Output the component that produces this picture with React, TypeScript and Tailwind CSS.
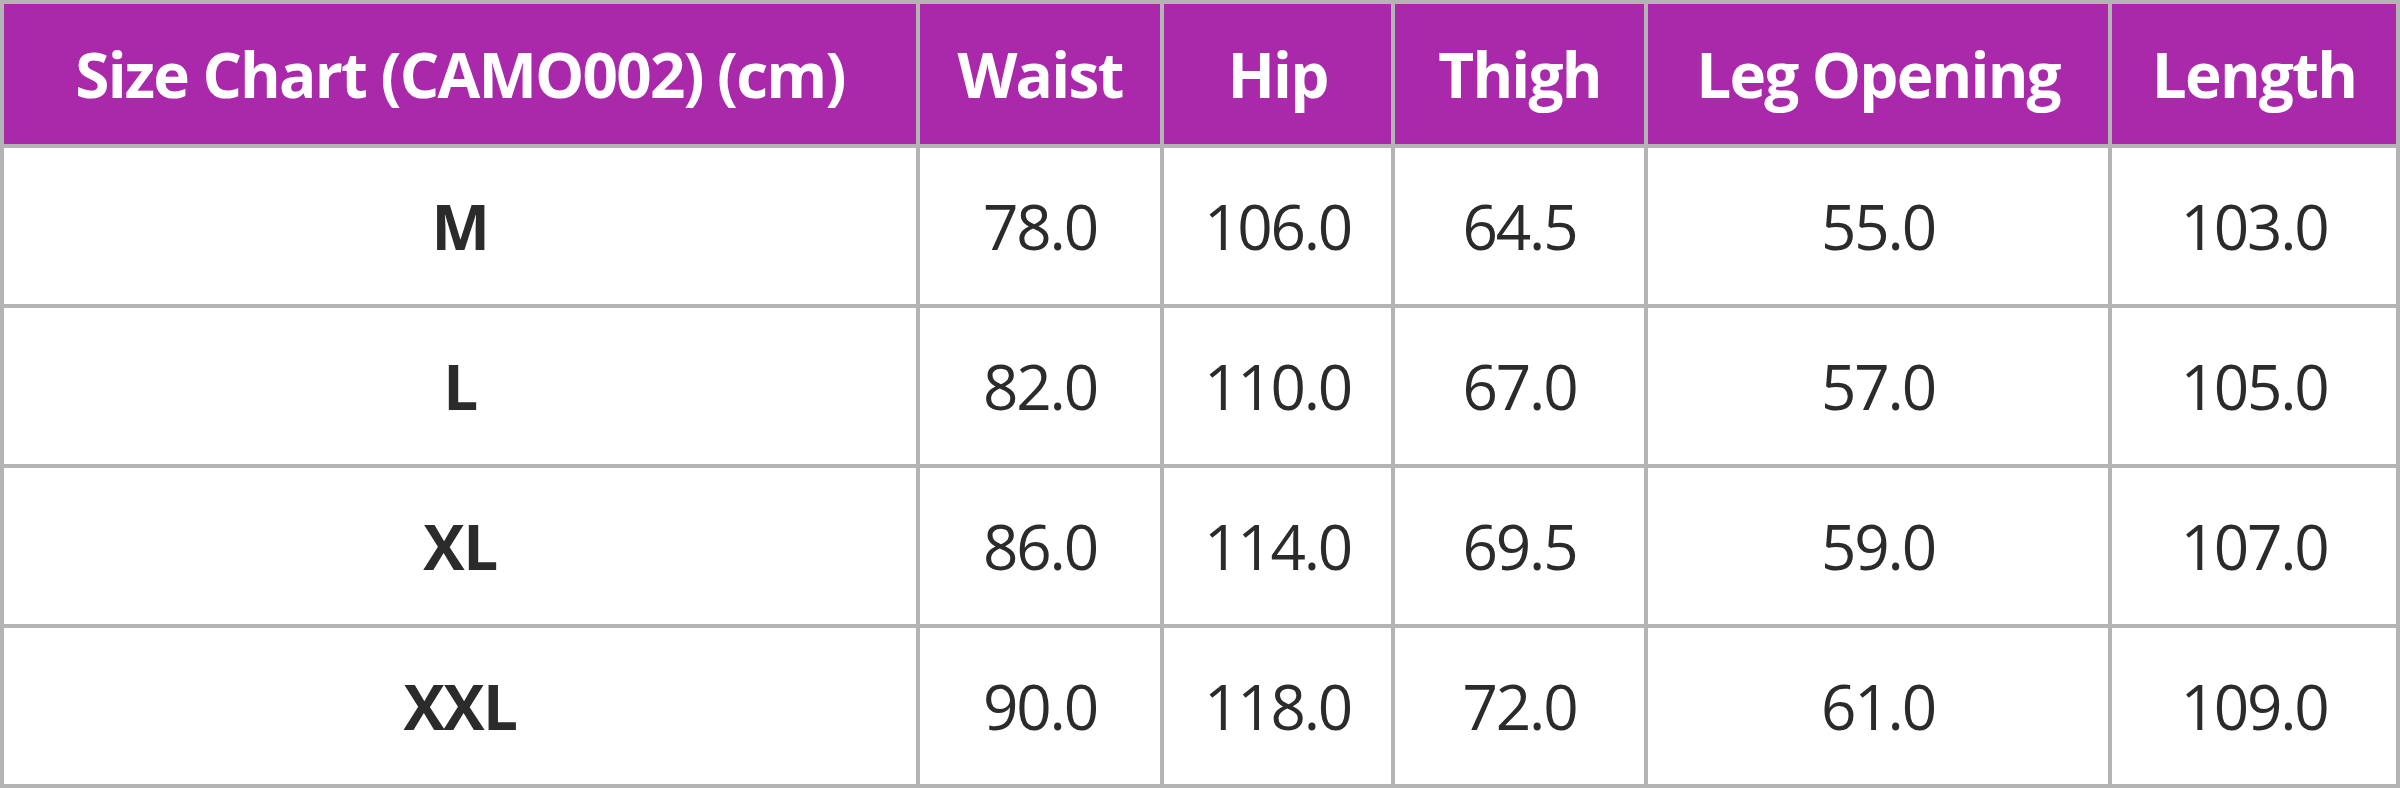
import React from "react";

const headers = ["Size Chart (CAMO002) (cm)", "Waist", "Hip", "Thigh", "Leg Opening", "Length"];
const rows: string[][] = [
  ["M", "78.0", "106.0", "64.5", "55.0", "103.0"],
  ["L", "82.0", "110.0", "67.0", "57.0", "105.0"],
  ["XL", "86.0", "114.0", "69.5", "59.0", "107.0"],
  ["XXL", "90.0", "118.0", "72.0", "61.0", "109.0"],
];

export default function App() {
  return (
    <div
      className="w-[2400px] h-[788px] bg-[#b4b4b4] p-[4px] grid gap-[4px] grid-cols-[912px_240px_227px_249px_460px_284px] grid-rows-[140px_156px_156px_156px_156px]"
      style={{ fontFamily: '"Open Sans", "Noto Sans", sans-serif' }}
    >
      {headers.map((h) => (
        <div
          key={h}
          className="bg-[#aa28aa] text-white font-bold text-[62px] flex items-center justify-center whitespace-nowrap tracking-[-1.8px]"
        >
          {h}
        </div>
      ))}
      {rows.map((r) =>
        r.map((c, i) => (
          <div
            key={r[0] + i}
            className={`bg-white text-[#2b2b2b] text-[62px] flex items-center justify-center whitespace-nowrap ${
              i === 0 ? "font-bold tracking-[-1.5px]" : "font-normal tracking-[-2.2px]"
            }`}
          >
            {c}
          </div>
        ))
      )}
    </div>
  );
}
